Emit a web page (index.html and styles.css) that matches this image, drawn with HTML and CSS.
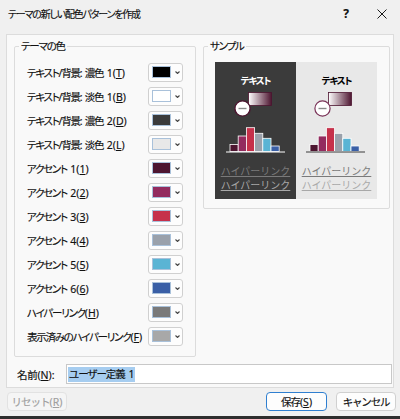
FILE: index.html
```html
<!DOCTYPE html>
<html lang="ja">
<head>
    <meta charset="utf-8">
    <!-- Dialog: create new theme colors -->
    <link rel="stylesheet" href="styles.css">
</head>
<body>
    <div class="window">
        <div class="titlebar">
            <span class="title">テーマの新しい配色パターンを作成</span>
            <span class="tb-btn tb-help">?</span>
            <span class="tb-btn">
                <svg width="10" height="10" viewBox="0 0 10 10"><path d="M0.5 0.5 L9.5 9.5 M9.5 0.5 L0.5 9.5" stroke="#1a1a1a" stroke-width="1"/></svg>
            </span>
        </div>

        <div class="page">
            <div class="groups">
                <!-- Theme colors -->
                <div class="group group-colors">
                    <div class="group-title">テーマの色</div>
                    <div class="row"><span>テキスト/背景: 濃色 <span class="acc">1(<u>T</u>)</span></span><span class="pick"><span class="swatch c-dk1"></span><svg class="chev" width="5" height="3"><polyline points="0.5,0.5 2.5,2.5 4.5,0.5" fill="none" stroke="#444" stroke-width="1.1"/></svg></span></div>
                    <div class="row"><span>テキスト/背景: 淡色 <span class="acc">1(<u>B</u>)</span></span><span class="pick"><span class="swatch c-lt1"></span><svg class="chev" width="5" height="3"><polyline points="0.5,0.5 2.5,2.5 4.5,0.5" fill="none" stroke="#444" stroke-width="1.1"/></svg></span></div>
                    <div class="row"><span>テキスト/背景: 濃色 <span class="acc">2(<u>D</u>)</span></span><span class="pick"><span class="swatch c-dk2"></span><svg class="chev" width="5" height="3"><polyline points="0.5,0.5 2.5,2.5 4.5,0.5" fill="none" stroke="#444" stroke-width="1.1"/></svg></span></div>
                    <div class="row"><span>テキスト/背景: 淡色 <span class="acc">2(<u>L</u>)</span></span><span class="pick"><span class="swatch c-lt2"></span><svg class="chev" width="5" height="3"><polyline points="0.5,0.5 2.5,2.5 4.5,0.5" fill="none" stroke="#444" stroke-width="1.1"/></svg></span></div>
                    <div class="row"><span>アクセント <span class="acc">1(<u>1</u>)</span></span><span class="pick"><span class="swatch c-ac1"></span><svg class="chev" width="5" height="3"><polyline points="0.5,0.5 2.5,2.5 4.5,0.5" fill="none" stroke="#444" stroke-width="1.1"/></svg></span></div>
                    <div class="row"><span>アクセント <span class="acc">2(<u>2</u>)</span></span><span class="pick"><span class="swatch c-ac2"></span><svg class="chev" width="5" height="3"><polyline points="0.5,0.5 2.5,2.5 4.5,0.5" fill="none" stroke="#444" stroke-width="1.1"/></svg></span></div>
                    <div class="row"><span>アクセント <span class="acc">3(<u>3</u>)</span></span><span class="pick"><span class="swatch c-ac3"></span><svg class="chev" width="5" height="3"><polyline points="0.5,0.5 2.5,2.5 4.5,0.5" fill="none" stroke="#444" stroke-width="1.1"/></svg></span></div>
                    <div class="row"><span>アクセント <span class="acc">4(<u>4</u>)</span></span><span class="pick"><span class="swatch c-ac4"></span><svg class="chev" width="5" height="3"><polyline points="0.5,0.5 2.5,2.5 4.5,0.5" fill="none" stroke="#444" stroke-width="1.1"/></svg></span></div>
                    <div class="row"><span>アクセント <span class="acc">5(<u>5</u>)</span></span><span class="pick"><span class="swatch c-ac5"></span><svg class="chev" width="5" height="3"><polyline points="0.5,0.5 2.5,2.5 4.5,0.5" fill="none" stroke="#444" stroke-width="1.1"/></svg></span></div>
                    <div class="row"><span>アクセント <span class="acc">6(<u>6</u>)</span></span><span class="pick"><span class="swatch c-ac6"></span><svg class="chev" width="5" height="3"><polyline points="0.5,0.5 2.5,2.5 4.5,0.5" fill="none" stroke="#444" stroke-width="1.1"/></svg></span></div>
                    <div class="row"><span>ハイパーリンク<span class="acc">(<u>H</u>)</span></span><span class="pick"><span class="swatch c-hlink"></span><svg class="chev" width="5" height="3"><polyline points="0.5,0.5 2.5,2.5 4.5,0.5" fill="none" stroke="#444" stroke-width="1.1"/></svg></span></div>
                    <div class="row"><span>表示済みのハイパーリンク<span class="acc">(<u>F</u>)</span></span><span class="pick"><span class="swatch c-folhlink"></span><svg class="chev" width="5" height="3"><polyline points="0.5,0.5 2.5,2.5 4.5,0.5" fill="none" stroke="#444" stroke-width="1.1"/></svg></span></div>
                </div>

                <!-- Sample preview -->
                <div class="group group-sample">
                    <div class="group-title">サンプル</div>
                    <div class="preview">
                        <div class="half half-dark">
                            <div class="sample-text">テキスト</div>
                            <svg class="sample-art" width="81" height="66" viewBox="0 0 81 66">
                                <defs>
                                    <linearGradient id="gd" x1="0" x2="1" y1="0" y2="0">
                                        <stop offset="0" stop-color="#ffffff"/>
                                        <stop offset="1" stop-color="#4d1530"/>
                                    </linearGradient>
                                </defs>
                                <rect x="33.5" y="2.5" width="23" height="13" fill="url(#gd)" stroke="#4d1530" stroke-width="0.8"/>
                                <circle cx="27.5" cy="18.5" r="7.6" fill="#ffffff" stroke="#4d1530" stroke-width="1.4"/>
                                <line x1="23.5" y1="18.5" x2="31.5" y2="18.5" stroke="#8a8a8a" stroke-width="1.4"/>
                                <g stroke="#ffffff" stroke-width="0.8">
                                    <rect x="15" y="54.5" width="8.2" height="7" fill="#4d1530"/>
                                    <rect x="23.2" y="46" width="8.2" height="15.5" fill="#932b5e"/>
                                    <rect x="31.4" y="37.7" width="8.2" height="23.8" fill="#c6314b"/>
                                    <rect x="39.6" y="43.3" width="8.2" height="18.2" fill="#9aa1ab"/>
                                    <rect x="47.8" y="48.3" width="8.2" height="13.2" fill="#5ab4d4"/>
                                    <rect x="56" y="56" width="8.2" height="5.5" fill="#3a5fa6"/>
                                </g>
                                <line x1="11" y1="62" x2="70" y2="62" stroke="#ffffff" stroke-width="1"/>
                            </svg>
                            <div class="sample-link">ハイパーリンク</div>
                            <div class="sample-link visited">ハイパーリンク</div>
                        </div>
                        <div class="half half-light">
                            <div class="sample-text">テキスト</div>
                            <svg class="sample-art" width="81" height="66" viewBox="0 0 81 66">
                                <defs>
                                    <linearGradient id="gl" x1="0" x2="1" y1="0" y2="0">
                                        <stop offset="0" stop-color="#ffffff"/>
                                        <stop offset="1" stop-color="#4d1530"/>
                                    </linearGradient>
                                </defs>
                                <rect x="32.5" y="2.5" width="23" height="13" fill="url(#gl)" stroke="#4d1530" stroke-width="0.8"/>
                                <circle cx="26.5" cy="18.5" r="7.6" fill="#ffffff" stroke="#7a3358" stroke-width="1.2"/>
                                <line x1="22.5" y1="18.5" x2="30.5" y2="18.5" stroke="#8a8a8a" stroke-width="1.4"/>
                                <g stroke="#ffffff" stroke-width="0.8">
                                    <rect x="14" y="54.5" width="8.2" height="7" fill="#4d1530"/>
                                    <rect x="22.2" y="46" width="8.2" height="15.5" fill="#932b5e"/>
                                    <rect x="30.4" y="37.7" width="8.2" height="23.8" fill="#c6314b"/>
                                    <rect x="38.6" y="43.3" width="8.2" height="18.2" fill="#9aa1ab"/>
                                    <rect x="46.8" y="48.3" width="8.2" height="13.2" fill="#5ab4d4"/>
                                    <rect x="55" y="56" width="8.2" height="5.5" fill="#3a5fa6"/>
                                </g>
                                <line x1="10" y1="62" x2="69" y2="62" stroke="#3b3b3b" stroke-width="1"/>
                            </svg>
                            <div class="sample-link">ハイパーリンク</div>
                            <div class="sample-link visited">ハイパーリンク</div>
                        </div>
                    </div>
                </div>
            </div>

            <div class="name-row">
                <span class="name-label">名前<span class="acc">(<u>N</u>):</span></span>
                <div class="name-input"><span class="selected">ユーザー定義 1</span></div>
            </div>
        </div>

        <div class="footer">
            <button class="btn btn-disabled">リセット<span class="acc">(<u>R</u>)</span></button>
            <span class="spacer"></span>
            <button class="btn btn-default">保存<span class="acc">(<u>S</u>)</span></button>
            <button class="btn btn-cancel">キャンセル</button>
        </div>
    </div>
</body>
</html>
```

FILE: styles.css
```css
/* Theme colors used by the swatches */
:root {
    --dk1: #000000;
    --lt1: #ffffff;
    --dk2: #3b3b3b;
    --lt2: #e8e8e8;
    --ac1: #4d1530;
    --ac2: #932b5e;
    --ac3: #c6314b;
    --ac4: #9aa1ab;
    --ac5: #5ab4d4;
    --ac6: #3a5fa6;
    --hlink: #7a7a7a;
    --folhlink: #a8a8a8;
    --text: #111111;
}

* {
    margin: 0;
    padding: 0;
    box-sizing: border-box;
}

body {
    background: #2e2e2e;
    font-family: "Noto Sans", "Noto Sans CJK JP", sans-serif;
    font-feature-settings: "palt" 1;
    font-size: 10.5px;
    letter-spacing: -1px;
    word-spacing: 2px;
    -webkit-text-stroke: 0.15px currentColor;
    color: var(--text);
    width: 400px;
    height: 419px;
    overflow: hidden;
}

/* latin access-key part keeps normal spacing */
.acc {
    letter-spacing: 0;
}

u {
    text-decoration: underline;
    text-underline-offset: 1px;
}

/* Window frame */
.window {
    width: 400px;
    height: 416px;
    background: #f0f0f0;
    display: flex;
    flex-direction: column;
}

.titlebar {
    height: 27px;
    display: flex;
    align-items: center;
}

.title {
    flex: 1;
    padding-left: 8px;
    font-size: 10px;
    letter-spacing: -1.2px;
}

.tb-btn {
    width: 36px;
    height: 27px;
    display: flex;
    align-items: center;
    justify-content: center;
}

.tb-help {
    font-weight: 700;
    font-size: 12px;
    letter-spacing: 0;
}

/* Inner page */
.page {
    margin: 7px 6px 0 6px;
    height: 354px;
    background: #f9f9f9;
    border: 1px solid #dcdcdc;
}

.groups {
    display: flex;
    align-items: flex-start;
    gap: 7px;
    margin: 11px 0 0 7px;
}

.group {
    border: 1px solid #dcdcdc;
    border-radius: 2px;
}

.group-title {
    margin: -8px 0 0 4px;
    padding: 0 2px;
    width: fit-content;
    line-height: 14px;
    letter-spacing: -1.2px;
    background: #f9f9f9;
}

.group-colors {
    width: 182px;
    height: 311px;
    padding: 0 12px;
}

.group-colors .group-title {
    margin-left: -8px;
    margin-bottom: 7px;
}

.group-sample {
    width: 187px;
    height: 163px;
}

/* Color rows */
.row {
    height: 24px;
    display: flex;
    align-items: center;
    justify-content: space-between;
    white-space: nowrap;
    letter-spacing: -1.25px;
}

.pick {
    flex: none;
    width: 35px;
    height: 19px;
    border: 1px solid #d0d0d0;
    border-radius: 3px;
    background: #fdfdfd;
    display: flex;
    align-items: center;
    padding-left: 3px;
    gap: 4px;
}

.swatch {
    width: 19px;
    height: 12px;
    border: 1px solid #a9c1da;
}

.c-dk1 { background: var(--dk1); }
.c-lt1 { background: var(--lt1); }
.c-dk2 { background: var(--dk2); }
.c-lt2 { background: var(--lt2); }
.c-ac1 { background: var(--ac1); }
.c-ac2 { background: var(--ac2); }
.c-ac3 { background: var(--ac3); }
.c-ac4 { background: var(--ac4); }
.c-ac5 { background: var(--ac5); }
.c-ac6 { background: var(--ac6); }
.c-hlink { background: var(--hlink); }
.c-folhlink { background: var(--folhlink); }

/* Sample preview */
.preview {
    display: flex;
    margin: 9px 0 0 11px;
    height: 137px;
}

.half {
    width: 81px;
    display: flex;
    flex-direction: column;
    align-items: center;
}

.half-dark {
    background: var(--dk2);
    color: var(--lt1);
}

.half-light {
    background: var(--lt2);
    color: var(--dk1);
}

.sample-text {
    margin-top: 12px;
    line-height: 14px;
    font-size: 9.5px;
    font-weight: 700;
    letter-spacing: -1.1px;
    -webkit-text-stroke: 0;
}

.sample-art {
    display: block;
    margin-top: 2px;
    margin-bottom: 8px;
}

.sample-link {
    font-size: 10px;
    line-height: 14.3px;
    letter-spacing: 0;
    -webkit-text-stroke: 0;
    font-feature-settings: normal;
    color: var(--hlink);
    text-decoration: underline;
}

.sample-link.visited {
    color: var(--folhlink);
}

/* Name field */
.name-row {
    display: flex;
    align-items: center;
    margin: 7px 0 0 10px;
}

.name-label {
    width: 49px;
    letter-spacing: -0.3px;
}

.name-input {
    width: 326px;
    height: 20px;
    border: 1px solid #c8c8c8;
    background: #ffffff;
    display: flex;
    align-items: center;
    padding-left: 1px;
}

.selected {
    background: #a6cdf0;
    line-height: 15px;
    padding: 0 1px;
}

/* Bottom buttons */
.footer {
    display: flex;
    align-items: flex-start;
    gap: 9px;
    padding: 4px 4px 0 7px;
}

.spacer {
    flex: 1;
}

.btn {
    width: 60px;
    height: 19px;
    font-family: inherit;
    font-size: 10.5px;
    letter-spacing: -1px;
    color: var(--text);
    background: #fdfdfd;
    border: 1px solid #d0d0d0;
    border-radius: 4px;
}

.btn-disabled {
    color: #a0a0a0;
    background: #f5f5f5;
    border-color: #e2e2e2;
}

.btn-default {
    width: 61px;
    border-color: #2f7fd0;
}

.btn-cancel {
    letter-spacing: -1.2px;
}
```
